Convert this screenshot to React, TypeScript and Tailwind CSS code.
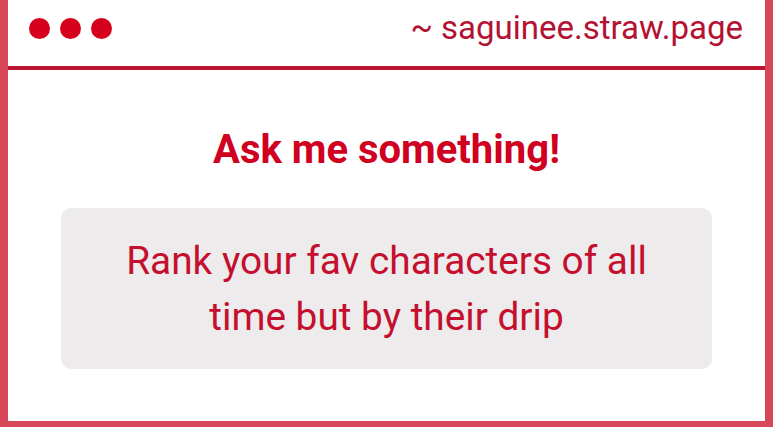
export default function App() {
  return (
    <div className="w-[773px] h-[427px] bg-white overflow-hidden font-['Roboto',sans-serif]">
      <div className="flex flex-col h-full border-x-8 border-b-[6px] border-[#d64858] bg-white">
        <header className="flex items-center justify-between h-[70px] pl-[21px] pr-[22px] pb-[10px] border-b-4 border-[#bd1531]">
          <div className="flex gap-[10px]">
            <span className="w-[21px] h-[21px] rounded-full bg-[#d6001c]" />
            <span className="w-[21px] h-[21px] rounded-full bg-[#d6001c]" />
            <span className="w-[21px] h-[21px] rounded-full bg-[#d6001c]" />
          </div>
          <div className="text-[33px] leading-[40px] text-[#b41232]">~ saguinee.straw.page</div>
        </header>

        <main className="flex flex-col items-center pt-[57px] px-[53px]">
          <h1 className="text-[40px] font-bold leading-[46px] text-[#cf0020]">Ask me something!</h1>
          <div className="mt-[35px] w-full h-[161px] rounded-[10px] bg-[#edebec] flex items-center justify-center">
            <p className="text-[38.8px] leading-[56px] text-[#c4102e] text-center max-w-[560px]">
              Rank your fav characters of all time but by their drip
            </p>
          </div>
        </main>
      </div>
    </div>
  );
}
